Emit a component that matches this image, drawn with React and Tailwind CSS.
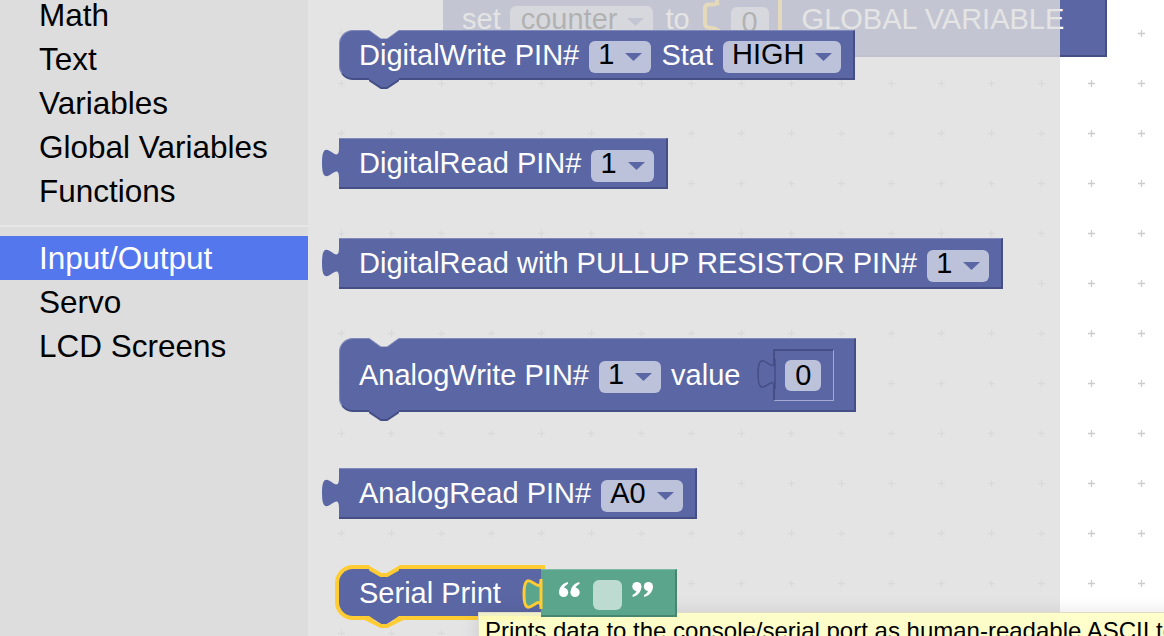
import React from 'react'

const topItems = ['Math', 'Text', 'Variables', 'Global Variables', 'Functions']
const bottomItems = ['Input/Output', 'Servo', 'LCD Screens']

function Arrow() {
  return (
    <svg width="17" height="8" viewBox="0 0 17 8" className="mt-[12px] shrink-0">
      <path d="M0 0h17l-8.5 8z" fill="#5b67a5" />
    </svg>
  )
}

function Dropdown({ label, className = '' }) {
  return (
    <span className={`flex h-[32px] shrink-0 items-start gap-[11px] rounded-[6px] bg-[#bdc2db] pl-[9px] pr-[9px] ${className}`}>
      <span className="leading-[27px] text-black">{label}</span>
      <Arrow />
    </span>
  )
}

function OutputTab({ className = '', fill = '#5b67a5', stroke = 'none', strokeWidth = 0 }) {
  return (
    <svg width="19" height="44" viewBox="0 0 19 44" className={`absolute ${className}`} overflow="visible">
      <path
        d="M18 40 C18 20 1 56 1 25 C1 -6 18 30 18 10 Z"
        fill={fill}
        stroke={stroke}
        strokeWidth={strokeWidth}
      />
    </svg>
  )
}

function TopNotch() {
  return (
    <svg width="30" height="9" viewBox="0 0 30 9" className="absolute left-[29px] top-[-1px]">
      <path d="M0 0 L12 9 L18 9 L30 0 Z" fill="#e4e4e4" />
      <path d="M0 0.5 L12 9 L18 9 L30 0.5" fill="none" stroke="#7f88ba" strokeWidth="1" />
    </svg>
  )
}

function NextTab() {
  return (
    <svg width="30" height="11" viewBox="0 0 30 11" className="absolute left-[29px] top-full">
      <path d="M0 0 H30 V2 L18 10 H12 L0 2 Z" fill="#5b67a5" />
      <path d="M0 2 L12 10 H18 L30 2" fill="none" stroke="#454e85" strokeWidth="2" />
    </svg>
  )
}

// one "6"-shaped quote mark, flipped for the closing one
function QuoteMark({ closing = false, className = '' }) {
  const mark = (
    <>
      <circle cx="4.6" cy="10.4" r="4.6" />
      <path d="M0.2 10 C0.4 5 3.5 1.5 8.6 0 L9.2 1.8 C6.4 3.2 4.8 5.4 4.6 7.6 Z" />
    </>
  )
  return (
    <svg width="21" height="15" viewBox="0 0 21 15" className={`shrink-0 ${className}`} fill="#ffffff">
      <g transform={closing ? 'rotate(180 10.5 7.5)' : undefined}>
        <g>{mark}</g>
        <g transform="translate(11.5 0)">{mark}</g>
      </g>
    </svg>
  )
}

function StatementBlock({ children, height = 'h-[50px]', pr = 'pr-[12px]', className = '' }) {
  return (
    <div
      className={`relative flex ${height} items-center gap-[10px] self-start rounded-l-[14px] border-l border-t border-b-2 border-r-2 border-l-[#8089bb] border-t-[#8089bb] border-b-[#454e85] border-r-[#454e85] bg-[#5b67a5] pl-[19px] ${pr} ${className}`}
    >
      <TopNotch />
      {children}
      <NextTab />
    </div>
  )
}

function ValueBlock({ children, className = '' }) {
  return (
    <div
      className={`relative flex h-[51px] items-center gap-[10px] self-start border-t border-b-2 border-r-2 border-t-[#8089bb] border-b-[#454e85] border-r-[#454e85] bg-[#5b67a5] pl-[20px] pr-[12px] ${className}`}
    >
      <OutputTab className="left-[-18px] top-[-1px]" />
      {children}
    </div>
  )
}

function Label({ children, className = '' }) {
  return <span className={`block shrink-0 whitespace-nowrap leading-[32px] text-white ${className}`}>{children}</span>
}

function GridPattern() {
  return (
    <svg className="absolute inset-0 h-full w-full">
      <defs>
        <pattern id="ws-grid" width="50" height="50" x="8" y="8" patternUnits="userSpaceOnUse">
          <path d="M22 25.5h7M25.5 22v7" stroke="#cccccc" strokeWidth="1.3" />
        </pattern>
      </defs>
      <rect width="100%" height="100%" fill="url(#ws-grid)" />
    </svg>
  )
}

export default function App() {
  return (
    <div className="relative flex h-[636px] w-[1164px] overflow-hidden font-['Liberation_Sans','Arial',sans-serif]">
      {/* toolbox */}
      <aside className="w-[308px] shrink-0 bg-[#dddddd] text-[31.5px] text-black">
        <div className="mt-[-7px]">
          {topItems.map((item) => (
            <div key={item} className="h-[44px] whitespace-nowrap pl-[39px] leading-[44px]">
              {item}
            </div>
          ))}
          <div className="mb-[9px] mt-[12px] h-[2px] bg-[#e6e6e6]" />
          {bottomItems.map((item) => (
            <div
              key={item}
              className={`h-[44px] whitespace-nowrap pl-[39px] leading-[44px] ${
                item === 'Input/Output' ? 'bg-[#5577ee] text-white' : ''
              }`}
            >
              {item}
            </div>
          ))}
        </div>
      </aside>

      {/* workspace */}
      <main className="relative flex-1 overflow-hidden bg-white text-[29px]">
        <GridPattern />

        {/* block on the workspace, behind the flyout */}
        <div className="absolute left-[135px] top-[-20px] flex h-[77px] w-[664px] items-start border-b-2 border-r-2 border-b-[#454e85] border-r-[#454e85] bg-[#5b67a5] pl-[19px] pt-[23px]">
          <Label>set</Label>
          <Dropdown label="counter" className="ml-[9px] mt-[3px] !gap-[10px] !pl-[11px]" />
          <Label className="ml-[12px]">to</Label>
          <div className="relative ml-[25px] mt-[-16px] h-[60px] w-[67px] shrink-0 border-4 border-[#ffcc33] bg-[#5b67a5] pl-[12px] pt-[16px]">
            <svg width="20" height="34" viewBox="0 0 20 34" className="absolute left-[-17px] top-[10px]" overflow="visible">
              <path d="M17 2 C10 6 3 0 3 8 L3 22 C3 30 10 24 17 30" fill="#5b67a5" stroke="#ffcc33" strokeWidth="4" />
            </svg>
            <div className="h-[31px] w-[38px] rounded-[6px] bg-[#bdc2db] text-center leading-[31px] text-black">0</div>
          </div>
          <Label className="ml-[20px]">GLOBAL VARIABLE</Label>
        </div>

        {/* flyout */}
        <div className="absolute inset-y-0 left-0 flex w-[752px] flex-col items-start bg-[#dddddd]/80 pl-[31px] pt-[30px]">
          <StatementBlock>
            <Label>DigitalWrite PIN#</Label>
            <Dropdown label="1" className="mt-[5px]" />
            <Label>Stat</Label>
            <Dropdown label="HIGH" className="mt-[5px]" />
          </StatementBlock>

          <ValueBlock className="mt-[58px]">
            <Label>DigitalRead PIN#</Label>
            <Dropdown label="1" className="mt-[5px]" />
          </ValueBlock>

          <ValueBlock className="mt-[49px]">
            <Label>DigitalRead with PULLUP RESISTOR PIN#</Label>
            <Dropdown label="1" className="mt-[5px]" />
          </ValueBlock>

          <StatementBlock height="h-[74px]" pr="pr-[20px]" className="mt-[49px]">
            <Label>AnalogWrite PIN#</Label>
            <Dropdown label="1" className="mt-[5px]" />
            <Label>value</Label>
            <div className="relative ml-[23px] flex h-[52px] w-[61px] shrink-0 items-center border-l-2 border-t-2 border-b border-r border-l-[#454e85] border-t-[#454e85] border-b-[#a3aad3] border-r-[#a3aad3] pl-[10px]">
              <OutputTab className="left-[-18px] top-[-2px]" stroke="#454e85" strokeWidth={1.5} />
              <div className="h-[31px] w-[36px] rounded-[6px] bg-[#bdc2db] text-center leading-[31px] text-black">0</div>
            </div>
          </StatementBlock>

          <ValueBlock className="mt-[56px]">
            <Label>AnalogRead PIN#</Label>
            <Dropdown label="A0" className="mt-[5px]" />
          </ValueBlock>

          {/* selected Serial Print block with a text block attached */}
          <div className="mt-[50px] flex items-start self-start">
            <div className="relative flex h-[47px] w-[202px] items-center rounded-l-[14px] bg-[#5b67a5] pl-[20px] shadow-[0_0_0_4px_#ffcc33]">
              <svg width="30" height="16" viewBox="0 0 30 16" className="absolute left-[30px] top-[-5px]">
                <path d="M0 0 H30 V3 L18 11 H12 L0 3 Z" fill="#e4e4e4" />
                <path d="M-2 3 L12 11 H18 L32 3" fill="none" stroke="#ffcc33" strokeWidth="4" />
              </svg>
              <Label>Serial Print</Label>
              <svg width="34" height="14" viewBox="0 0 34 14" className="absolute left-[28px] top-full" overflow="visible">
                <path d="M2 -4 H32 V0 L20 8 H14 L2 0 Z" fill="#5b67a5" />
                <path d="M-2 2 L14 10 H20 L36 2" fill="none" stroke="#ffcc33" strokeWidth="4" />
              </svg>
            </div>
            <div className="relative z-10 flex h-[48px] w-[136px] items-start border-t border-b-2 border-r-2 border-t-[#80bba7] border-b-[#47876f] border-r-[#47876f] bg-[#5ba58c] pl-[18px]">
              <OutputTab className="left-[-18px] top-[-1px]" fill="#5ba58c" stroke="#ffcc33" strokeWidth={3} />
              <QuoteMark className="mt-[12px]" />
              <span className="ml-[13px] mt-[10px] h-[30px] w-[29px] rounded-[6px] bg-[#bddbd1]" />
              <QuoteMark closing className="ml-[10px] mt-[12px]" />
            </div>
          </div>
        </div>

        {/* tooltip */}
        <div className="absolute left-[170px] top-[612px] whitespace-nowrap border border-[#ddddcc] bg-[#ffffc7]/90 pl-[6px] pr-[6px] pt-[1px] text-[24px] leading-[34px] text-black shadow-[4px_4px_20px_1px_rgba(0,0,0,0.15)]">
          Prints data to the console/serial port as human-readable ASCII text.
        </div>
      </main>
    </div>
  )
}
